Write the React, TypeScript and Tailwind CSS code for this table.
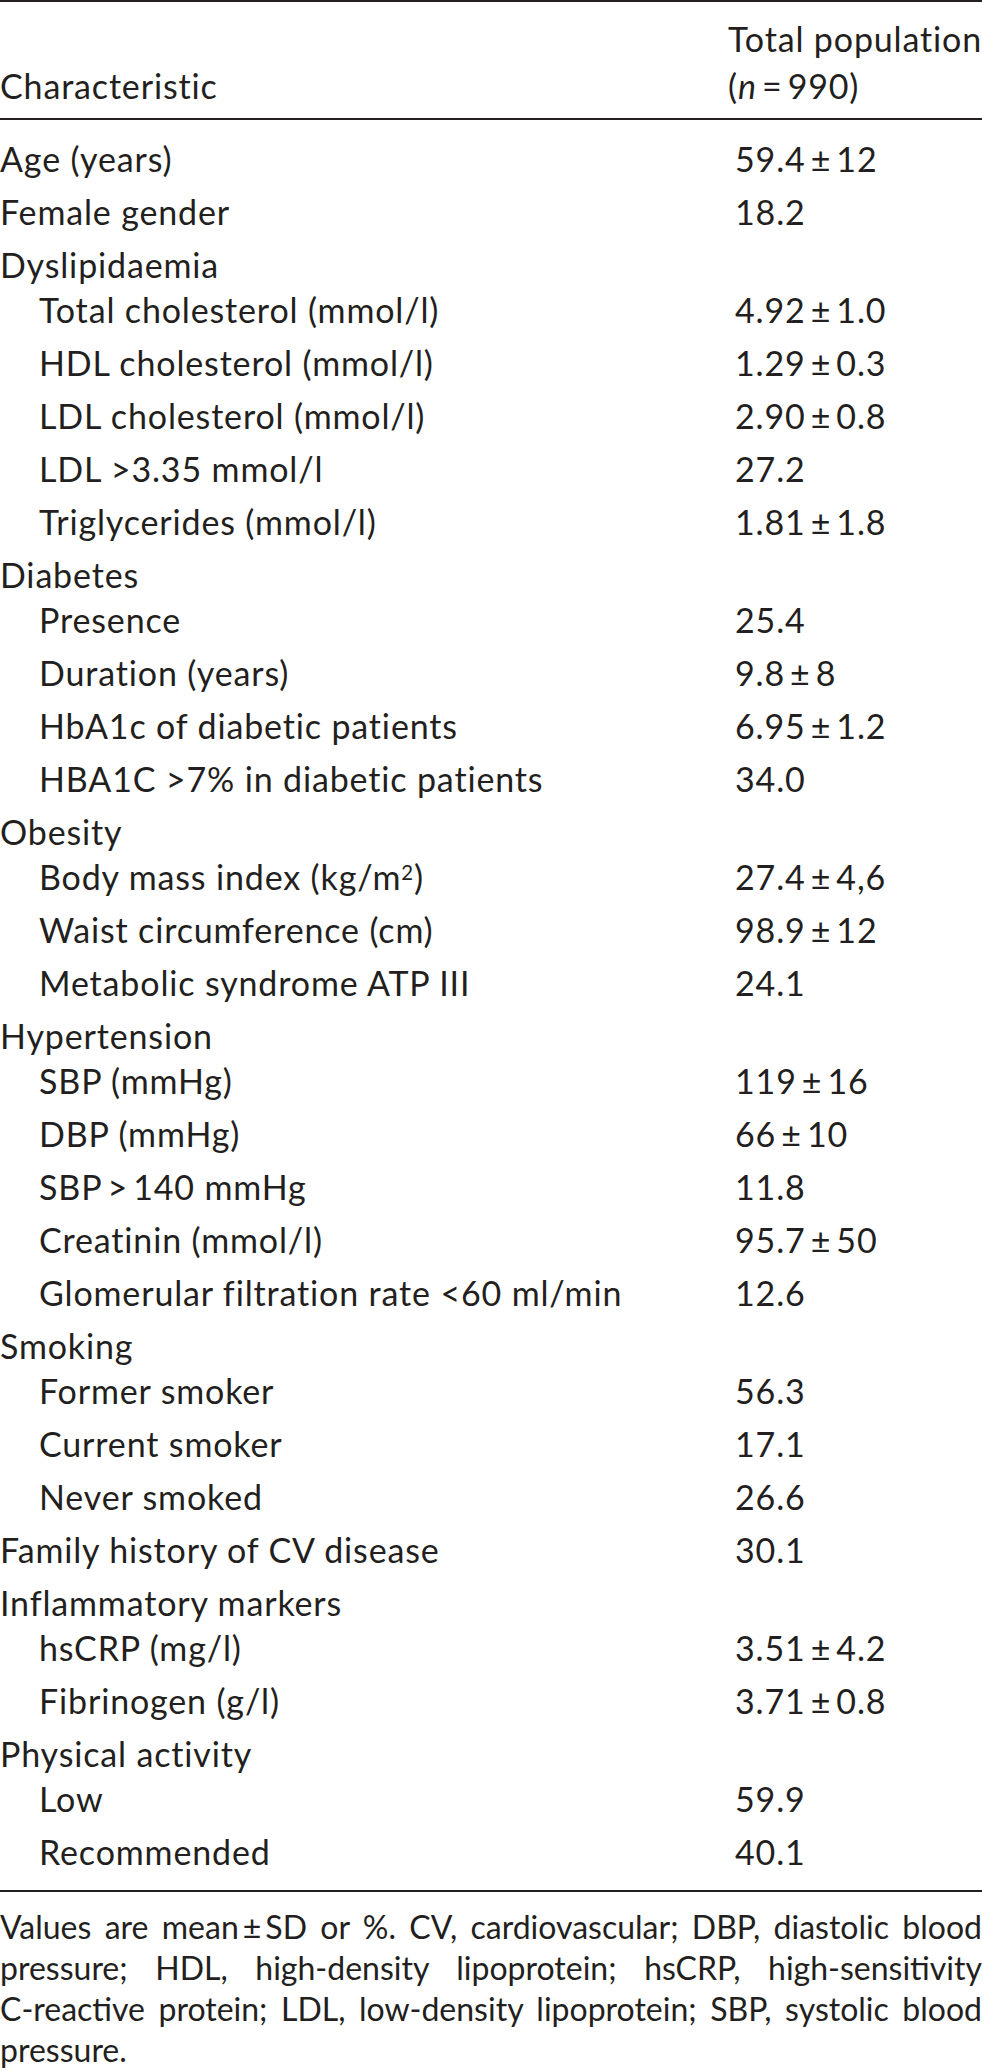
import React from 'react';

type Row = { label: React.ReactNode; value?: string; sub?: boolean; group?: boolean };

const pm = '\u2009\u00b1\u2009';

const rows: Row[] = [
  { label: 'Age (years)', value: `59.4${pm}12` },
  { label: 'Female gender', value: '18.2' },
  { label: 'Dyslipidaemia', group: true },
  { label: 'Total cholesterol (mmol/l)', value: `4.92${pm}1.0`, sub: true },
  { label: 'HDL cholesterol (mmol/l)', value: `1.29${pm}0.3`, sub: true },
  { label: 'LDL cholesterol (mmol/l)', value: `2.90${pm}0.8`, sub: true },
  { label: 'LDL >3.35 mmol/l', value: '27.2', sub: true },
  { label: 'Triglycerides (mmol/l)', value: `1.81${pm}1.8`, sub: true },
  { label: 'Diabetes', group: true },
  { label: 'Presence', value: '25.4', sub: true },
  { label: 'Duration (years)', value: `9.8${pm}8`, sub: true },
  { label: 'HbA1c of diabetic patients', value: `6.95${pm}1.2`, sub: true },
  { label: 'HBA1C >7% in diabetic patients', value: '34.0', sub: true },
  { label: 'Obesity', group: true },
  {
    label: (
      <>
        Body mass index (kg/m<sup className="text-[0.6em]">2</sup>)
      </>
    ),
    value: `27.4${pm}4,6`,
    sub: true,
  },
  { label: 'Waist circumference (cm)', value: `98.9${pm}12`, sub: true },
  { label: 'Metabolic syndrome ATP III', value: '24.1', sub: true },
  { label: 'Hypertension', group: true },
  { label: 'SBP (mmHg)', value: `119${pm}16`, sub: true },
  { label: 'DBP (mmHg)', value: `66${pm}10`, sub: true },
  { label: 'SBP\u2009>\u2009140 mmHg', value: '11.8', sub: true },
  { label: 'Creatinin (mmol/l)', value: `95.7${pm}50`, sub: true },
  { label: 'Glomerular filtration rate <60 ml/min', value: '12.6', sub: true },
  { label: 'Smoking', group: true },
  { label: 'Former smoker', value: '56.3', sub: true },
  { label: 'Current smoker', value: '17.1', sub: true },
  { label: 'Never smoked', value: '26.6', sub: true },
  { label: 'Family history of CV disease', value: '30.1' },
  { label: 'Inflammatory markers', group: true },
  { label: 'hsCRP (mg/l)', value: `3.51${pm}4.2`, sub: true },
  { label: 'Fibrinogen (g/l)', value: `3.71${pm}0.8`, sub: true },
  { label: 'Physical activity', group: true },
  { label: 'Low', value: '59.9', sub: true },
  { label: 'Recommended', value: '40.1', sub: true },
];

const footerLines = [
  'Values are mean\u2009\u00b1\u2009SD or %. CV, cardiovascular; DBP, diastolic blood',
  'pressure; HDL, high-density lipoprotein; hsCRP, high-sensitivity',
  'C-reactive protein; LDL, low-density lipoprotein; SBP, systolic blood',
];

export default function App() {
  return (
    <div className="w-[982px] bg-white text-[#231f20] font-['Lato','Liberation_Sans',sans-serif] text-[34px] tracking-[0.025em]">
      {/* header */}
      <div className="flex border-t-2 border-b-2 border-[#231f20] pt-[13px] pb-[9px] leading-[47px]">
        <div className="w-[735px] flex items-end">Characteristic</div>
        <div className="flex-1 whitespace-nowrap">
          <div>Total population</div>
          <div>
            (<i>n</i>{'\u2009=\u2009'}990)
          </div>
        </div>
      </div>

      {/* body */}
      <div className="pt-[12px] pb-[12px] border-b-2 border-[#231f20]">
        {rows.map((r, i) => (
          <div
            key={i}
            className={`flex h-[53px] leading-[53px] whitespace-nowrap ${r.group ? '-mb-2' : ''}`}
          >
            <div className={`w-[735px] ${r.sub ? 'pl-[39px]' : ''}`}>{r.label}</div>
            <div className="flex-1">{r.value}</div>
          </div>
        ))}
      </div>

      {/* footnote */}
      <div className="pt-[14px] leading-[41px] text-[32px] tracking-normal">
        {footerLines.map((l, i) => (
          <div key={i} className="whitespace-nowrap text-justify [text-align-last:justify]">
            {l}
          </div>
        ))}
        <div>pressure.</div>
      </div>
    </div>
  );
}
